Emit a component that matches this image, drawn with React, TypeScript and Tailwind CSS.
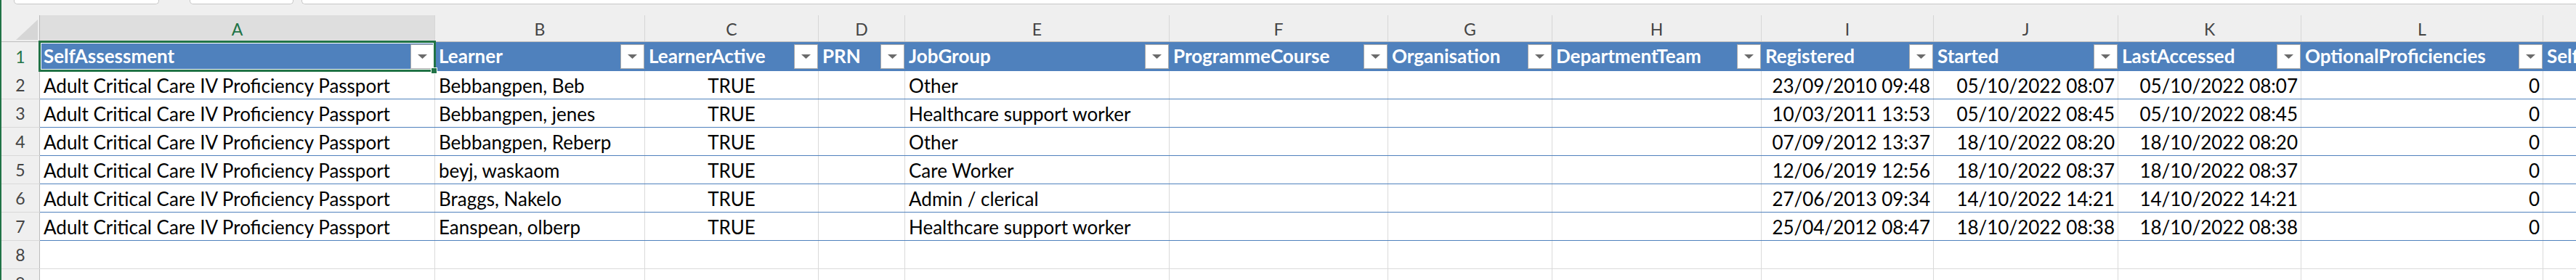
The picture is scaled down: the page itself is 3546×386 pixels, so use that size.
import React from 'react';
import clsx from 'clsx';

type Align = 'l' | 'c' | 'r';

const COLS: { key: string; w: string; head: string; align: Align; button?: boolean }[] = [
  { key: 'A', w: 'w-[544px]', head: 'SelfAssessment', align: 'l', button: true },
  { key: 'B', w: 'w-[289px]', head: 'Learner', align: 'l', button: true },
  { key: 'C', w: 'w-[239px]', head: 'LearnerActive', align: 'c', button: true },
  { key: 'D', w: 'w-[119px]', head: 'PRN', align: 'l', button: true },
  { key: 'E', w: 'w-[364px]', head: 'JobGroup', align: 'l', button: true },
  { key: 'F', w: 'w-[301px]', head: 'ProgrammeCourse', align: 'l', button: true },
  { key: 'G', w: 'w-[226px]', head: 'Organisation', align: 'l', button: true },
  { key: 'H', w: 'w-[288px]', head: 'DepartmentTeam', align: 'l', button: true },
  { key: 'I', w: 'w-[237px]', head: 'Registered', align: 'r', button: true },
  { key: 'J', w: 'w-[254px]', head: 'Started', align: 'r', button: true },
  { key: 'K', w: 'w-[252px]', head: 'LastAccessed', align: 'r', button: true },
  { key: 'L', w: 'w-[333px]', head: 'OptionalProficiencies', align: 'r', button: true },
  { key: 'M', w: 'w-[320px]', head: 'Self', align: 'l' },
];

const SA = 'Adult Critical Care IV Proficiency Passport';

const ROWS: string[][] = [
  [SA, 'Bebbangpen, Beb', 'TRUE', '', 'Other', '', '', '', '23/09/2010 09:48', '05/10/2022 08:07', '05/10/2022 08:07', '0', ''],
  [SA, 'Bebbangpen, jenes', 'TRUE', '', 'Healthcare support worker', '', '', '', '10/03/2011 13:53', '05/10/2022 08:45', '05/10/2022 08:45', '0', ''],
  [SA, 'Bebbangpen, Reberp', 'TRUE', '', 'Other', '', '', '', '07/09/2012 13:37', '18/10/2022 08:20', '18/10/2022 08:20', '0', ''],
  [SA, 'beyj, waskaom', 'TRUE', '', 'Care Worker', '', '', '', '12/06/2019 12:56', '18/10/2022 08:37', '18/10/2022 08:37', '0', ''],
  [SA, 'Braggs, Nakelo', 'TRUE', '', 'Admin / clerical', '', '', '', '27/06/2013 09:34', '14/10/2022 14:21', '14/10/2022 14:21', '0', ''],
  [SA, 'Eanspean, olberp', 'TRUE', '', 'Healthcare support worker', '', '', '', '25/04/2012 08:47', '18/10/2022 08:38', '18/10/2022 08:38', '0', ''],
];

const alignCls = (a: Align) =>
  a === 'c' ? 'justify-center' : a === 'r' ? 'justify-end pr-[4px]' : 'justify-start pl-[5px]';

function FilterButton() {
  return (
    <div className="shrink-0 self-start mt-[3px] mr-[1px] w-[33px] h-[34px] bg-white border border-[#ababab] flex items-center justify-center">
      <svg width="13" height="6" viewBox="0 0 13 6">
        <path d="M0 0 H13 L6.5 6 Z" fill="#6b6b6b" />
      </svg>
    </div>
  );
}

function RowHead({ n, green }: { n: number; green?: boolean }) {
  return (
    <div
      className={clsx(
        'w-[53px] shrink-0 bg-[#efefef] border-r border-[#bcbcbc] flex items-center justify-center text-[23px] leading-none',
        green ? 'text-[#217346]' : 'text-[#444]'
      )}
    >
      {n}
    </div>
  );
}

export default function App() {
  return (
    <div className="w-[3546px] h-[386px] overflow-hidden flex bg-white font-['Lato','Liberation_Sans',sans-serif]">
      <div className="w-[2px] shrink-0 bg-[#217346]" />
      <div className="flex-1 overflow-hidden flex flex-col">
        {/* name box / formula bar bottoms */}
        <div className="h-[6px] shrink-0 flex bg-[#efefef]">
          <div className="w-[17px] shrink-0" />
          <div className="w-[200px] shrink-0 bg-white border border-t-0 border-[#c6c6c6] rounded-b-[5px]" />
          <div className="w-[42px] shrink-0" />
          <div className="w-[143px] shrink-0 bg-white border border-t-0 border-[#c6c6c6] rounded-b-[5px]" />
          <div className="w-[11px] shrink-0" />
          <div className="flex-1 bg-white border border-t-0 border-r-0 border-[#c6c6c6] rounded-bl-[5px]" />
        </div>
        <div className="h-[15px] shrink-0 bg-[#efefef]" />

        {/* column letters */}
        <div className="h-[37px] shrink-0 flex bg-[#efefef] border-b border-[#bcbcbc]">
          <div className="w-[53px] shrink-0 border-r border-[#bcbcbc]">
            <svg width="53" height="36" viewBox="0 0 53 36" className="block">
              <path d="M50 6 V34 H20 Z" fill="#d6d6d6" />
            </svg>
          </div>
          {COLS.map((c) => (
            <div
              key={c.key}
              className={clsx(
                c.w,
                'shrink-0 border-r border-[#d6d6d6] flex items-end justify-center pb-[5px] text-[23px] leading-none',
                c.key === 'A' ? 'bg-[#dedede] text-[#217346]' : 'text-[#444]'
              )}
            >
              {c.key}
            </div>
          ))}
        </div>

        {/* table header row */}
        <div className="h-[40px] shrink-0 flex">
          <RowHead n={1} green />
          {COLS.map((c) => (
            <div key={c.key} className={clsx(c.w, 'shrink-0 relative flex bg-[#4f81bd] pl-[5px]')}>
              <span className="flex-1 self-end pb-[5px] whitespace-nowrap text-white font-bold text-[26px] leading-[31px]">
                {c.head}
              </span>
              {c.button && <FilterButton />}
              {c.key === 'A' && (
                <div className="absolute -left-[2px] -top-[2px] -right-[1px] -bottom-[1px] z-10 border-[3px] border-[#217346]">
                  <div className="absolute inset-0 border border-white" />
                  <div className="absolute -right-[5px] -bottom-[6px] w-[9px] h-[9px] bg-[#217346] border border-white" />
                </div>
              )}
            </div>
          ))}
        </div>

        {/* data rows */}
        {ROWS.map((r, i) => (
          <div key={i} className="h-[39px] shrink-0 flex">
            <div className="flex border-b border-[#d9d9d9]">
              <RowHead n={i + 2} />
            </div>
            <div className="flex border-b border-[#4f81bd]">
              {COLS.map((c, j) => (
                <div
                  key={c.key}
                  className={clsx(
                    c.w,
                    'shrink-0 border-r border-[#dadada] flex items-end pb-[2.5px] whitespace-nowrap text-[26px] leading-[31px] text-black',
                    alignCls(c.align)
                  )}
                >
                  {r[j]}
                </div>
              ))}
            </div>
          </div>
        ))}

        {/* empty rows */}
        {[8, 9].map((n) => (
          <div key={n} className="h-[39px] shrink-0 flex border-b border-[#dadada]">
            <RowHead n={n} />
            {COLS.map((c) => (
              <div key={c.key} className={clsx(c.w, 'shrink-0 border-r border-[#dadada]')} />
            ))}
          </div>
        ))}
      </div>
    </div>
  );
}
